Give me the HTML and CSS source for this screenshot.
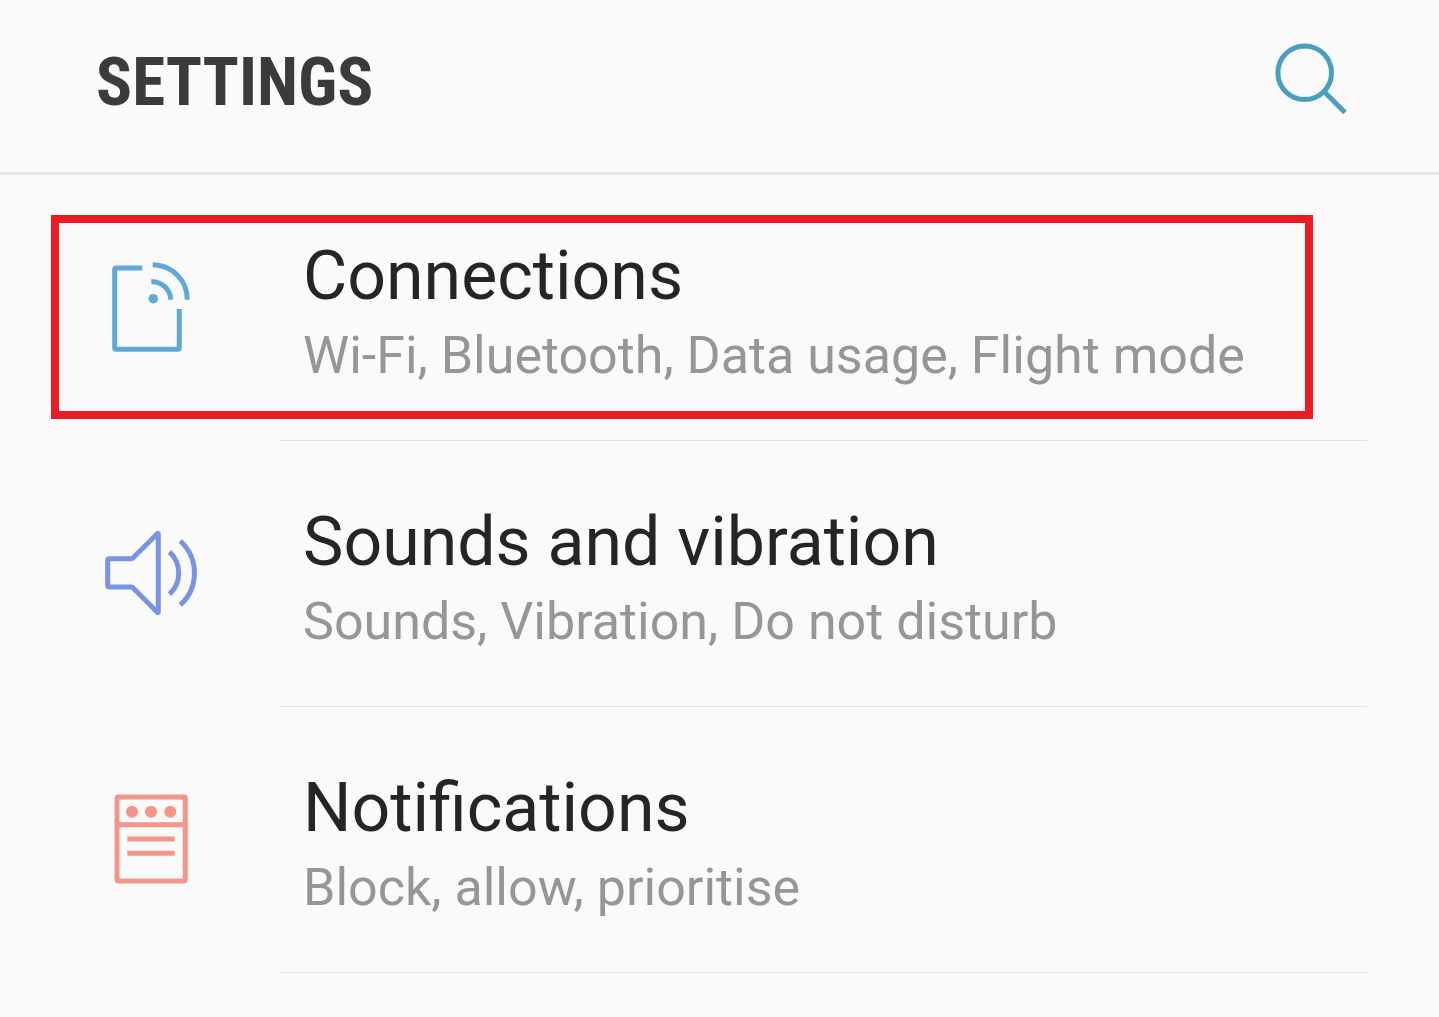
FILE: index.html
```html
<!DOCTYPE html>
<html lang="en">
<head>
    <meta charset="UTF-8">
    <meta name="viewport" content="width=device-width, initial-scale=1.0">
    <title>Settings</title>
    <link rel="stylesheet" href="styles.css">
</head>
<body>
    <header class="header">
        <h1>SETTINGS</h1>
        <button class="search-btn" type="button" aria-label="Search">
            <svg width="72" height="78" viewBox="0 0 72 78">
                <circle cx="29.7" cy="29.7" r="26.8"/>
                <path d="M49 48.5L70 69.5"/>
            </svg>
        </button>
    </header>

    <main class="settings-list">
        <a class="item selected" href="#connections">
            <svg class="icon connections" width="96" height="96" viewBox="0 0 96 96">
                <path d="M39.3 8H13.2Q11.7 8 11.7 9.5V87.8Q11.7 89.3 13.2 89.3H74.8Q76.3 89.3 76.3 87.8V49"/>
                <path d="M49.7 4.7A34.8 34.8 0 0 1 84.3 39.7M48.3 21.7A18.5 18.5 0 0 1 67.7 39.7"/>
                <circle class="dot" cx="50.3" cy="38.7" r="4.8"/>
            </svg>
            <div class="text">
                <h2>Connections</h2>
                <p>Wi-Fi, Bluetooth, Data usage, Flight mode</p>
            </div>
        </a>
        <a class="item" href="#sounds">
            <svg class="icon sounds" width="96" height="96" viewBox="0 0 96 96">
                <path d="M6.2 32.7H28Q29.3 32.7 30.2 31.8L54.3 7.7Q55.3 6.7 55.3 8V86Q55.3 87.3 54.3 86.3L30.2 62Q29.3 61 28 61H6.2Q4.7 61 4.7 59.5V34.2Q4.7 32.7 6.2 32.7Z"/>
                <path d="M66.5 25.8A29 29 0 0 1 66.5 68.2M77.3 15A43.3 43.3 0 0 1 77.3 79"/>
            </svg>
            <div class="text">
                <h2>Sounds and vibration</h2>
                <p>Sounds, Vibration, Do not disturb</p>
            </div>
        </a>
        <a class="item" href="#notifications">
            <svg class="icon notifications" width="96" height="96" viewBox="0 0 96 96">
                <rect x="14" y="5" width="68.3" height="84" rx="1.5"/>
                <path d="M14 32.7H82.3M24.3 47H71.7M24.3 61.3H71.7"/>
                <circle class="dot" cx="29" cy="19.7" r="6"/>
                <circle class="dot" cx="48" cy="19.7" r="6"/>
                <circle class="dot" cx="67.3" cy="19.7" r="6"/>
            </svg>
            <div class="text">
                <h2>Notifications</h2>
                <p>Block, allow, prioritise</p>
            </div>
        </a>
    </main>
</body>
</html>
```
FILE: styles.css
```css
* {
    box-sizing: border-box;
}
body {
    margin: 0;
    font-family: Roboto, sans-serif;
    background: #fafafa;
    color: #252525;
}
h1, h2, p {
    margin: 0;
}
.header {
    display: flex;
    justify-content: space-between;
    align-items: center;
    padding: 42px 92px 50px 96px;
    height: 175px;
    border-bottom: 3px solid #e6e6e6;
}
.header h1 {
    font-size: 67px;
    line-height: 80px;
    font-weight: bold;
    font-stretch: condensed;
    font-family: "Roboto Condensed", Roboto, sans-serif;
    color: #3b3b3b;
}
.search-btn {
    padding: 0;
    border: none;
    background: none;
    cursor: pointer;
}
.search-btn svg {
    display: block;
    fill: none;
    stroke: #4a9fc0;
    stroke-width: 5;
}
.item {
    position: relative;
    display: flex;
    align-items: center;
    padding: 0 72px 0 103px;
    color: inherit;
    text-decoration: none;
}
/* red frame around the highlighted row */
.selected::before {
    content: "";
    position: absolute;
    top: 40px;
    right: 126px;
    bottom: 22px;
    left: 51px;
    border: 8px solid #ed1c24;
}
.icon {
    flex: none;
    fill: none;
    stroke: currentColor;
    stroke-width: 5;
    stroke-linejoin: round;
}
.icon .dot {
    fill: currentColor;
    stroke: none;
}
.connections {
    color: #60a9d7;
}
.sounds {
    color: #7b94e2;
}
.notifications {
    color: #f39589;
}
.text {
    flex: 1;
    margin-left: 80px;
    padding: 61px 0 44px 24px;
    border-bottom: 1px solid #e4e4e4;
}
.text h2 {
    font-size: 68px;
    line-height: 80px;
    font-weight: normal;
}
.text p {
    font-size: 52px;
    line-height: 80px;
    color: #969696;
}
```
